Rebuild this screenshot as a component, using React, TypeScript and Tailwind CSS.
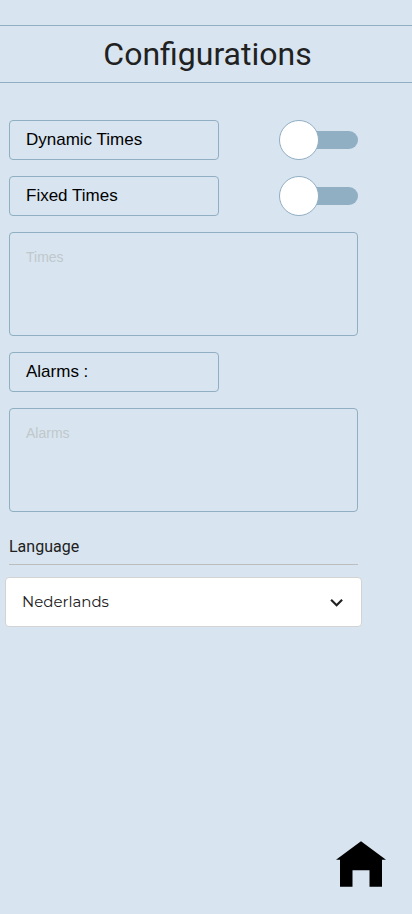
import React from "react";

function Label({ children }: { children: React.ReactNode }) {
  return (
    <div className="flex h-10 w-[210px] items-center rounded-[4px] border border-[#91afc3] pl-4 font-['Liberation_Sans',Arial,sans-serif] text-[17px] leading-5 text-black">
      {children}
    </div>
  );
}

function Toggle() {
  return (
    <button type="button" role="switch" aria-checked="false" className="flex h-10 w-[79px] items-center">
      <span className="z-10 size-10 shrink-0 rounded-full border border-[#91afc3] bg-white" />
      <span className="-ml-[5px] h-[18px] flex-1 rounded-r-full bg-[#91afc3]" />
    </button>
  );
}

function Field({ placeholder }: { placeholder: string }) {
  return (
    <textarea
      placeholder={placeholder}
      className="block h-[104px] w-[349px] resize-none rounded-[4px] border border-[#91afc3] bg-transparent px-4 py-[14px] font-['Liberation_Sans',Arial,sans-serif] text-sm leading-5 placeholder:text-[#bfc8cb]"
    />
  );
}

export default function App() {
  return (
    <div className="flex h-[914px] w-[412px] flex-col overflow-hidden bg-[#d8e4ef] pt-[25px] font-[Roboto,sans-serif] text-[#212121]">
      <header className="flex h-[58px] shrink-0 items-center justify-center border-y border-[#91afc3] pl-[3px]">
        <h1 className="text-[32px] leading-[40px]">Configurations</h1>
      </header>

      <main className="ml-[9px] mt-[37px] flex w-[349px] flex-col gap-4">
        <div className="flex justify-between">
          <Label>Dynamic Times</Label>
          <Toggle />
        </div>
        <div className="flex justify-between">
          <Label>Fixed Times</Label>
          <Toggle />
        </div>
        <Field placeholder="Times" />
        <Label>Alarms :</Label>
        <Field placeholder="Alarms" />
        <section className="pt-[7px]">
          <h2 className="h-[30px] border-b border-[#bdbdbd] pt-[2px] text-base leading-[20px]">Language</h2>
          <button
            type="button"
            className="-ml-1 mt-3 flex h-[50px] w-[357px] items-center justify-between rounded-[4px] border border-[#d3d3d3] bg-white pl-4 pr-[17px] font-[Montserrat,Inter,sans-serif] text-[15px]"
          >
            <span>Nederlands</span>
            <svg className="mt-[1px]" width="14" height="10" viewBox="0 0 14 10" fill="none" stroke="#212121" strokeWidth="2.2">
              <path d="M1.1 1.7 6.6 7.2l5.5-5.5" />
            </svg>
          </button>
        </section>
      </main>

      <footer className="mb-[27px] mr-[26px] mt-auto flex justify-end">
        <svg width="50" height="46" viewBox="0 0 50 46" fill="#000">
          <path d="M25 0.3 50 18.8h-4V45.8H33.5V29.3h-17V45.8H4V18.8H0Z" />
        </svg>
      </footer>
    </div>
  );
}
